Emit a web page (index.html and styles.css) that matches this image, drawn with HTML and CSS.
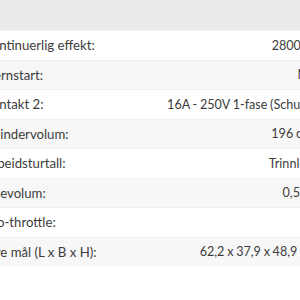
FILE: index.html
```html
<!DOCTYPE html>
<html>
<head>
<meta charset="utf-8">
<link rel="stylesheet" href="styles.css">
</head>
<body>
<div class="spec">
  <div class="head"></div>
  <div class="row"><span class="label">Kontinuerlig effekt:</span><span class="value">2800 W</span></div>
  <div class="row alt"><span class="label">Fjernstart:</span><span class="value">Nei</span></div>
  <div class="row"><span class="label">Kontakt 2:</span><span class="value">16A - 250V 1-fase (Schuko)</span></div>
  <div class="row alt"><span class="label">Sylindervolum:</span><span class="value">196 cm³</span></div>
  <div class="row"><span class="label">Arbeidsturtall:</span><span class="value">Trinnløst</span></div>
  <div class="row alt"><span class="label">Oljevolum:</span><span class="value">0,55 L</span></div>
  <div class="row"><span class="label">Eco-throttle:</span><span class="value">Ja</span></div>
  <div class="row alt"><span class="label">Ytre mål (L x B x H):</span><span class="value">62,2 x 37,9 x 48,9 cm</span></div>
</div>
</body>
</html>
```
FILE: styles.css
```css
html, body {
  margin: 0;
  padding: 0;
  background: #ffffff;
  overflow: hidden;
}
body {
  width: 300px;
  height: 300px;
  font-family: Lato, "Open Sans", sans-serif;
  font-size: 13.2px;
  color: #3c3c3c;
}
.spec {
  margin-left: -16.5px;
  width: 333px;
}
.head {
  height: 30px;
  background: #ebebeb;
}
.row {
  height: 29.5px;
  display: flex;
  align-items: center;
  justify-content: space-between;
  background: #ffffff;
  border-top: 1px solid #f0f0f0;
  box-sizing: border-box;
}
.row.alt {
  background: #f7f7f7;
}
.label {
  white-space: nowrap;
}
.value {
  white-space: nowrap;
  text-align: right;
  font-size: 12.6px;
  word-spacing: -0.5px;
}
```
